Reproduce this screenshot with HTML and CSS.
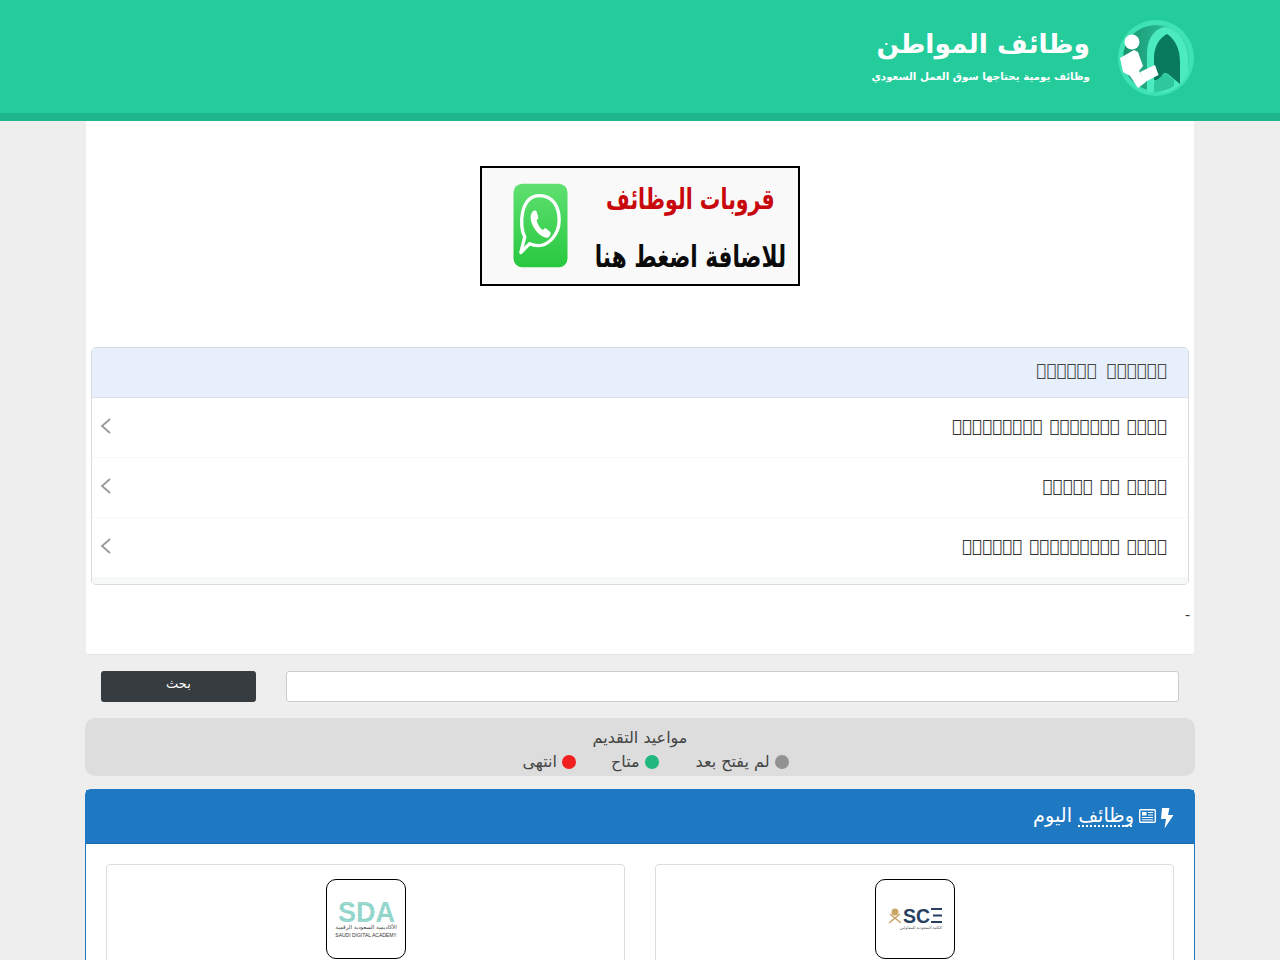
FILE: index.html
```html
<!DOCTYPE html>
<html lang="ar" dir="rtl">
<head>
<meta charset="utf-8">
<title>وظائف المواطن</title>
<link rel="stylesheet" href="styles.css">
</head>
<body>
<header class="site-header">
  <div class="wrap header-inner">
    <a class="logo">
      <svg class="logo-mark" width="76" height="76" viewBox="0 0 76 76">
        <defs>
          <linearGradient id="ring" x1="0" y1="0" x2="1" y2="0"><stop offset="0" stop-color="#17926f"/><stop offset="1" stop-color="#35d5a8"/></linearGradient>
        </defs>
        <circle cx="38" cy="38" r="38" fill="#3fe2b4"/>
        <circle cx="38" cy="38" r="33" fill="url(#ring)"/>
        <path d="M29 72V34C29 17 38 8 47 7C60 9 70 22 70 40V54C66 62 58 69 48 72Z" fill="#4ceabf"/>
        <path d="M36 60V38C36 27 41 18 49 14C57 19 62 29 62 42V64L50 54C47 52 45 53 44 56L43 62Z" fill="#0a7a5c"/>
        <path d="M36 62L44 56C46 53 48 53 50 55L56 60L56 66C50 70 42 72 36 72Z" fill="#2fc79d"/>
        <circle cx="14" cy="22" r="7.500" fill="#fff"/>
        <path d="M2 38L16 30L20 32L25 46L21 51L28 62L20 68L12 56L5 52Z" fill="#fff"/>
        <path d="M37 45L40.500 55L27 62L22 52Z" fill="#fff"/>
      </svg>
      <div class="logo-text">
        <div class="logo-title">وظائف المواطن</div>
        <div class="logo-sub">وظائف يومية يحتاجها سوق العمل السعودي</div>
      </div>
    </a>
  </div>
</header>
<main class="wrap">
  <section class="top-card">
    <div class="banner-row">
      <a class="banner">
        <div class="banner-text">
          <div class="banner-red">قروبات الوظائف</div>
          <div class="banner-black">للاضافة اضغط هنا</div>
        </div>
        <svg class="wa" width="55" height="85" viewBox="0 0 56 85">
          <defs><linearGradient id="wa" x1="0" y1="0" x2="0" y2="1"><stop offset="0" stop-color="#5fe070"/><stop offset="1" stop-color="#28c840"/></linearGradient></defs>
          <rect x="0.5" width="55" height="85" rx="9" fill="url(#wa)"/>
          <path d="M8 70L12 54C6 44 7 12 27 12C41 12 47 24 47 37C47 54 34 63 26 63C23 63 19 62 17 61Z" fill="none" stroke="#fff" stroke-width="3.4" stroke-linejoin="round"/>
          <path d="M22 27C18 29 17 34 19 40C22 48 28 54 34 55C37 55 39 52 38 49L33 45L30 47C27 45 25 41 24 37L26 35L24 28Z" fill="#fff"/>
        </svg>
      </a>
    </div>
    <div class="list-group">
      <div class="list-head">&#xE000;&#xE000;&#xE000;&#xE000;&#xE000;&#xE000; &#xE000;&#xE000;&#xE000;&#xE000;&#xE000;&#xE000;</div>
      <a class="list-row"><span>&#xE000;&#xE000;&#xE000;&#xE000;&#xE000;&#xE000;&#xE000;&#xE000;&#xE000; &#xE000;&#xE000;&#xE000;&#xE000;&#xE000;&#xE000;&#xE000; &#xE000;&#xE000;&#xE000;&#xE000;</span><svg class="chev" width="12" height="18" viewBox="0 0 12 18"><path d="M10 2L2 9L10 16" fill="none" stroke="#999" stroke-width="1.8"/></svg></a>
      <a class="list-row"><span>&#xE000;&#xE000;&#xE000;&#xE000;&#xE000; &#xE000;&#xE000; &#xE000;&#xE000;&#xE000;&#xE000;</span><svg class="chev" width="12" height="18" viewBox="0 0 12 18"><path d="M10 2L2 9L10 16" fill="none" stroke="#999" stroke-width="1.8"/></svg></a>
      <a class="list-row"><span>&#xE000;&#xE000;&#xE000;&#xE000;&#xE000;&#xE000; &#xE000;&#xE000;&#xE000;&#xE000;&#xE000;&#xE000;&#xE000;&#xE000;&#xE000; &#xE000;&#xE000;&#xE000;&#xE000;</span><svg class="chev" width="12" height="18" viewBox="0 0 12 18"><path d="M10 2L2 9L10 16" fill="none" stroke="#999" stroke-width="1.8"/></svg></a>
      <div class="list-foot"></div>
    </div>
    <div class="dash">-</div>
  </section>
  <form class="search">
    <input class="search-input" type="text">
    <button class="search-btn" type="button">بحث</button>
  </form>
  <section class="legend">
    <div>مواعيد التقديم</div>
    <div class="legend-items">
      <span class="legend-item legend-first"><i class="dot dot-grey"></i>لم يفتح بعد</span>
      <span class="legend-item"><i class="dot dot-green"></i>متاح</span>
      <span class="legend-item"><i class="dot dot-red"></i>انتهى</span>
    </div>
  </section>
  <section class="today">
    <h2 class="today-head">
      <svg class="bolt" width="13" height="21" viewBox="0 0 13 21"><path d="M1 0H8.500L7 7H12.500L3.500 20.500L5 11H0Z" fill="#fff"/></svg>
      <svg class="news" width="17" height="14" viewBox="0 0 17 14"><rect x=".7" y=".7" width="15.600" height="12.600" rx="1" fill="none" stroke="#fff" stroke-width="1.400"/><rect x="3" y="3" width="4.500" height="3.500" fill="#fff"/><path d="M9 3.500H14M9 6H14M3 8.500H14M3 10.800H14" stroke="#fff"/></svg>
      <span class="today-title"><u>وظائف</u> اليوم</span>
    </h2>
    <div class="today-body">
      <article class="job-card">
        <div class="job-logo">
          <svg class="logo-svg" width="56" height="26" viewBox="0 0 56 26">
            <circle cx="8" cy="6" r="3.500" fill="#c9a566"/>
            <path d="M2 17L13 8M14 17L3 8" stroke="#c9a566" stroke-width="1.600"/>
            <text class="sce" x="16" y="17" textLength="27" lengthAdjust="spacingAndGlyphs">SC</text>
            <path d="M44 3H55M46 9.500H55M44 16H55" stroke="#27405f" stroke-width="2.200"/>
            <text class="sce-sub" x="55" y="23" text-anchor="end">الكلية السعودية للمقاولين</text>
          </svg>
        </div>
      </article>
      <article class="job-card">
        <div class="job-logo">
          <svg class="logo-svg" width="62" height="40" viewBox="0 0 62 40">
            <defs><pattern id="dots" width="1.400" height="1.400" patternUnits="userSpaceOnUse"><circle cx=".7" cy=".7" r=".6" fill="#2fae9c"/></pattern></defs>
            <text class="sda" x="3" y="23" fill="url(#dots)" textLength="57" lengthAdjust="spacingAndGlyphs">SDA</text>
            <text class="sda-ar" x="31" y="30" text-anchor="middle">الأكاديمية السعودية الرقمية</text>
            <text class="sda-en" x="31" y="38" text-anchor="middle">SAUDI DIGITAL ACADEMY</text>
          </svg>
        </div>
      </article>
    </div>
  </section>
</main>
</body>
</html>
```
FILE: styles.css
```css
* { box-sizing: border-box; }
html, body { margin: 0; height: 960px; overflow: hidden; }
body { background: #eee; font-family: "DejaVu Sans", sans-serif; color: #333; font-size: 16px; }
.wrap { width: 1110px; margin: 0 auto; }
.site-header { height: 121px; background: #24cc9c; border-bottom: 8px solid #1fb58d; }
.header-inner { display: flex; padding: 20px 0 0 0; }
.logo { display: flex; align-items: center; height: 76px; padding-right: 1px; }
.logo-mark { flex: none; }
.logo-text { width: 270px; padding-right: 28px; color: #fff; }
.logo-title { font: 700 26.500px/36px "DejaVu Sans", sans-serif; white-space: nowrap; }
.logo-sub { font: 700 10.300px/28px "DejaVu Sans", sans-serif; white-space: nowrap; }
.top-card { height: 534px; background: #fff; border-radius: 0 0 4px 4px; border-bottom: 1px solid #e6e6e6; margin: 0 1px; padding: 45px 5px 0 5px; }
.banner-row { display: flex; justify-content: center; height: 181px; }
.banner { display: flex; align-items: center; justify-content: space-between; width: 320px; height: 120px; border: 2px solid #000; background: #f9f9f9; padding: 0 12px 0 31px; }
.banner-text { text-align: center; font-family: "DejaVu Sans", sans-serif; font-weight: 700; padding-top: 6px; }
.banner-red { color: #c8080c; font-size: 20.500px; line-height: 56px; transform: scaleY(1.4); }
.banner-black { color: #0b0b0b; font-size: 21.600px; line-height: 60px; white-space: nowrap; transform: scaleY(1.4); }
.wa { flex: none; margin-bottom: 2px; }
.list-group { border: 1px solid #d9dde2; border-radius: 5px; height: 238px; overflow: hidden; }
.list-head { height: 50px; background: #e8effc; border-bottom: 1px solid #dcdfe4; padding-right: 21px; font: 16.800px/45px "DejaVu Sans", sans-serif; word-spacing: 4.500px; color: #444; }
.list-row { display: flex; justify-content: space-between; align-items: center; height: 60px; padding: 0 21px 0 8px; border-bottom: 1px solid #f6f7f8; font: 16.800px/1 "DejaVu Sans", sans-serif; word-spacing: 1.500px; color: #333; }
.list-row span { margin-bottom: 2px; }
.chev { margin-bottom: 3px; }
.list-foot { height: 6px; background: #f7f9f9; }
.dash { text-align: right; font-size: 14px; line-height: 14px; padding: 23px 0 0 0; color: #333; margin-right: -1px; direction: ltr; }
.search { display: flex; justify-content: space-between; padding: 16px 16px 0 16px; }
.search-input { width: 893px; height: 31px; border: 1px solid #ccc; border-radius: 3px; background: #fff; }
.search-btn { width: 155px; height: 31px; border: 0; border-radius: 3px; background: #373c41; color: #fff; font: 13px/1 "DejaVu Sans", sans-serif; padding: 0 0 7px 0; }
.legend { margin-top: 16px; height: 58px; background: #ddd; border-radius: 10px; text-align: center; line-height: 24px; padding-top: 8px; color: #444; }
.legend-items { display: flex; justify-content: center; gap: 35px; padding-left: 31px; }
.legend-item { display: flex; align-items: center; gap: 5px; }
.legend-first { margin-left: 2px; }
.dot { width: 14px; height: 14px; border-radius: 50%; }
.dot-grey { background: #929292; }
.dot-green { background: #20b87f; }
.dot-red { background: #f02020; }
.today { margin-top: 13px; height: 200px; background: #fff; border: 1px solid #1e78c2; border-radius: 6px 6px 0 0; }
.today-head { margin: 0; height: 54px; background: #1e78c2; border-bottom: 1px solid #1a6aa8; display: flex; align-items: center; gap: 5px; padding: 0 20px 0 0; color: #fff; font-size: 19.300px; font-weight: 400; }
.today-head u { text-decoration: underline dotted 2px; text-decoration-skip-ink: none; text-underline-offset: 3px; }
.today-title { margin-bottom: 2px; }
.bolt { margin-top: 4px; }
.news { margin-bottom: 2px; }
.today-body { display: flex; gap: 30px; padding: 20px 20px 0; }
.job-card { flex: 1; height: 120px; border: 1px solid #ddd; border-radius: 4px; padding-top: 14px; display: flex; justify-content: center; align-items: flex-start; }
.job-logo { width: 80px; height: 80px; border: 1px solid #000; border-radius: 10px; background: #fff; display: flex; align-items: center; justify-content: center; }
.logo-svg { direction: ltr; overflow: visible; }
.sce { font: 700 21px "Liberation Sans", sans-serif; fill: #27405f; }
.sce-sub { font: 4px "DejaVu Sans", sans-serif; fill: #555; }
.sda { font: 700 30px "Liberation Sans", sans-serif; }
.sda-ar { font: 5.500px "DejaVu Sans", sans-serif; fill: #444; }
.sda-en { font: 5px "Liberation Sans", sans-serif; fill: #333; }
```
